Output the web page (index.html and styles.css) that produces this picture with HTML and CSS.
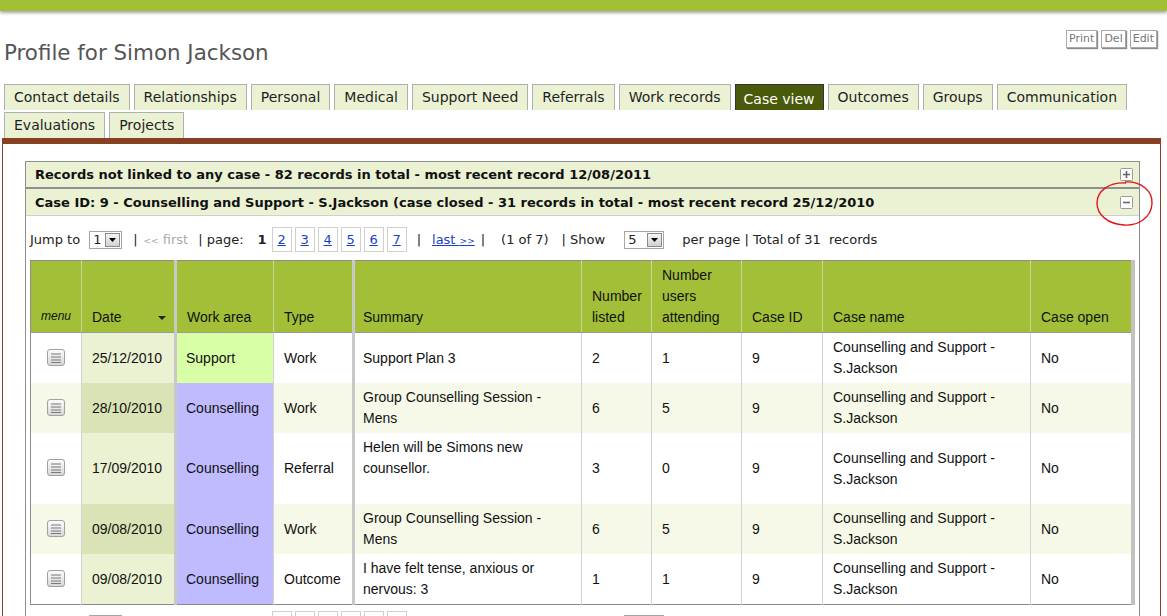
FILE: index.html
```html
<!DOCTYPE html>
<html>
<head>
<meta charset="utf-8">
<title>Profile for Simon Jackson</title>
<link rel="stylesheet" href="styles.css">
</head>
<body>
<div class="topbar"></div>
<div class="header">
  <h1 class="title">Profile for Simon Jackson</h1>
  <div class="actions">
    <span class="btn">Print</span>
    <span class="btn">Del</span>
    <span class="btn">Edit</span>
  </div>
</div>
<div class="tabs">
  <span class="tab">Contact details</span>
  <span class="tab">Relationships</span>
  <span class="tab">Personal</span>
  <span class="tab">Medical</span>
  <span class="tab">Support Need</span>
  <span class="tab">Referrals</span>
  <span class="tab">Work records</span>
  <span class="tab active">Case view</span>
  <span class="tab">Outcomes</span>
  <span class="tab">Groups</span>
  <span class="tab">Communication</span>
  <span class="tab">Evaluations</span>
  <span class="tab">Projects</span>
</div>
<div class="panel">
  <div class="casebox">
    <div class="casehead first">
      <span>Records not linked to any case - 82 records in total - most recent record 12/08/2011</span>
      <span class="toggle">
        <svg width="13" height="13" viewBox="0 0 13 13"><rect x="0.5" y="0.5" width="12" height="12" rx="1" fill="#fff" stroke="#9a9a9a"/><path d="M3 6.5h7M6.5 3v7" stroke="#666" stroke-width="1.6"/></svg>
      </span>
    </div>
    <div class="casehead second">
      <span>Case ID: 9 - Counselling and Support - S.Jackson (case closed - 31 records in total - most recent record 25/12/2010</span>
      <span class="toggle">
        <svg width="13" height="13" viewBox="0 0 13 13"><rect x="0.5" y="0.5" width="12" height="12" rx="1" fill="#fff" stroke="#9a9a9a"/><path d="M3 6.5h7" stroke="#666" stroke-width="1.6"/></svg>
      </span>
    </div>
    <svg class="annot" width="60" height="48" viewBox="0 0 60 48"><path d="M30 2 C46 1 58 11 57 24 C56 37 44 46 29 45 C13 44 2 35 2 23 C2 11 14 2 31 3" fill="none" stroke="#e0161b" stroke-width="1.4"/></svg>
    <div class="casebody">
      <div class="pager">
        <span class="p-jump">Jump to</span>
        <span class="sel sel-page"><span class="sel-val">1</span><span class="sel-btn"><svg width="7" height="4" viewBox="0 0 7 4"><path d="M0 0h7L3.5 4z" fill="#000"/></svg></span></span>
        <span class="p-bar1">|</span>
        <span class="p-first"><span class="arr">&lt;&lt;</span> first</span>
        <span class="p-page">| page:</span>
        <span class="p-cur">1</span>
        <span class="p-nums">
          <a class="p-num">2</a><a class="p-num">3</a><a class="p-num">4</a><a class="p-num">5</a><a class="p-num">6</a><a class="p-num">7</a>
        </span>
        <span class="p-bar2">|</span>
        <a class="p-last">last <span class="arr">&gt;&gt;</span></a>
        <span class="p-bar3">|</span>
        <span class="p-of">(1 of 7)</span>
        <span class="p-show">| Show</span>
        <span class="sel sel-size"><span class="sel-val">5</span><span class="sel-btn"><svg width="7" height="4" viewBox="0 0 7 4"><path d="M0 0h7L3.5 4z" fill="#000"/></svg></span></span>
        <span class="p-per">per page | Total of 31&nbsp; records</span>
      </div>
      <table class="records">
        <colgroup>
          <col class="c-menu"><col class="c-date"><col class="c-area"><col class="c-type"><col class="c-sum"><col class="c-listed"><col class="c-att"><col class="c-id"><col class="c-name"><col class="c-open">
        </colgroup>
        <thead>
          <tr>
            <th class="menuh">menu</th>
            <th class="thick">Date <span class="sort"></span></th>
            <th>Work area</th>
            <th class="thick">Type</th>
            <th class="sum">Summary</th>
            <th>Number<br>listed</th>
            <th>Number<br>users<br>attending</th>
            <th>Case ID</th>
            <th>Case name</th>
            <th class="last">Case open</th>
          </tr>
        </thead>
        <tbody>
          <tr>
            <td class="menu"><span class="micon"><svg width="18" height="17" viewBox="0 0 18 17"><defs><linearGradient id="mg" x1="0" y1="0" x2="0" y2="1"><stop offset="0" stop-color="#fdfdfd"/><stop offset="1" stop-color="#d6d6d6"/></linearGradient></defs><rect x="0.5" y="0.5" width="17" height="16" rx="2.5" fill="url(#mg)" stroke="#a0a0a0"/><path d="M4 5h10M4 8h10M4 11h10M4 13.5h10" stroke="#7a7a7a" stroke-width="1.2"/></svg></span></td>
            <td class="date thick">25/12/2010</td>
            <td class="area support">Support</td>
            <td class="thick">Work</td>
            <td class="sum">Support Plan 3</td>
            <td>2</td>
            <td>1</td>
            <td>9</td>
            <td>Counselling and Support -<br>S.Jackson</td>
            <td class="last">No</td>
          </tr>
          <tr class="alt">
            <td class="menu"><span class="micon"><svg width="18" height="17" viewBox="0 0 18 17"><rect x="0.5" y="0.5" width="17" height="16" rx="2.5" fill="url(#mg)" stroke="#a0a0a0"/><path d="M4 5h10M4 8h10M4 11h10M4 13.5h10" stroke="#7a7a7a" stroke-width="1.2"/></svg></span></td>
            <td class="date thick">28/10/2010</td>
            <td class="area counsel">Counselling</td>
            <td class="thick">Work</td>
            <td class="sum">Group Counselling Session -<br>Mens</td>
            <td>6</td>
            <td>5</td>
            <td>9</td>
            <td>Counselling and Support -<br>S.Jackson</td>
            <td class="last">No</td>
          </tr>
          <tr>
            <td class="menu"><span class="micon"><svg width="18" height="17" viewBox="0 0 18 17"><rect x="0.5" y="0.5" width="17" height="16" rx="2.5" fill="url(#mg)" stroke="#a0a0a0"/><path d="M4 5h10M4 8h10M4 11h10M4 13.5h10" stroke="#7a7a7a" stroke-width="1.2"/></svg></span></td>
            <td class="date thick">17/09/2010</td>
            <td class="area counsel">Counselling</td>
            <td class="thick">Referral</td>
            <td class="sum">Helen will be Simons new<br>counsellor.<br>&nbsp;</td>
            <td>3</td>
            <td>0</td>
            <td>9</td>
            <td>Counselling and Support -<br>S.Jackson</td>
            <td class="last">No</td>
          </tr>
          <tr class="alt">
            <td class="menu"><span class="micon"><svg width="18" height="17" viewBox="0 0 18 17"><rect x="0.5" y="0.5" width="17" height="16" rx="2.5" fill="url(#mg)" stroke="#a0a0a0"/><path d="M4 5h10M4 8h10M4 11h10M4 13.5h10" stroke="#7a7a7a" stroke-width="1.2"/></svg></span></td>
            <td class="date thick">09/08/2010</td>
            <td class="area counsel">Counselling</td>
            <td class="thick">Work</td>
            <td class="sum">Group Counselling Session -<br>Mens</td>
            <td>6</td>
            <td>5</td>
            <td>9</td>
            <td>Counselling and Support -<br>S.Jackson</td>
            <td class="last">No</td>
          </tr>
          <tr>
            <td class="menu"><span class="micon"><svg width="18" height="17" viewBox="0 0 18 17"><rect x="0.5" y="0.5" width="17" height="16" rx="2.5" fill="url(#mg)" stroke="#a0a0a0"/><path d="M4 5h10M4 8h10M4 11h10M4 13.5h10" stroke="#7a7a7a" stroke-width="1.2"/></svg></span></td>
            <td class="date thick">09/08/2010</td>
            <td class="area counsel">Counselling</td>
            <td class="thick">Outcome</td>
            <td class="sum">I have felt tense, anxious or<br>nervous: 3</td>
            <td>1</td>
            <td>1</td>
            <td>9</td>
            <td>Counselling and Support -<br>S.Jackson</td>
            <td class="last">No</td>
          </tr>
        </tbody>
      </table>
      <div class="pager">
        <span class="p-jump">Jump to</span>
        <span class="sel sel-page"><span class="sel-val">1</span><span class="sel-btn"><svg width="7" height="4" viewBox="0 0 7 4"><path d="M0 0h7L3.5 4z" fill="#000"/></svg></span></span>
        <span class="p-bar1">|</span>
        <span class="p-first"><span class="arr">&lt;&lt;</span> first</span>
        <span class="p-page">| page:</span>
        <span class="p-cur">1</span>
        <span class="p-nums">
          <a class="p-num">2</a><a class="p-num">3</a><a class="p-num">4</a><a class="p-num">5</a><a class="p-num">6</a><a class="p-num">7</a>
        </span>
        <span class="p-bar2">|</span>
        <a class="p-last">last <span class="arr">&gt;&gt;</span></a>
        <span class="p-bar3">|</span>
        <span class="p-of">(1 of 7)</span>
        <span class="p-show">| Show</span>
        <span class="sel sel-size"><span class="sel-val">5</span><span class="sel-btn"><svg width="7" height="4" viewBox="0 0 7 4"><path d="M0 0h7L3.5 4z" fill="#000"/></svg></span></span>
        <span class="p-per">per page | Total of 31&nbsp; records</span>
      </div>
    </div>
  </div>
</div>
</body>
</html>
```
FILE: styles.css
```css
* { box-sizing: border-box; }
html, body { margin: 0; padding: 0; background: #fff; }
body {
  font-family: "DejaVu Sans", Verdana, sans-serif;
  color: #222;
  width: 1167px;
  height: 616px;
  overflow: hidden;
}
.topbar {
  height: 11px;
  background: #a3bf36;
  box-shadow: 0 2px 3px rgba(0,0,0,0.35);
}
.header {
  display: flex;
  justify-content: space-between;
  align-items: flex-start;
  padding: 0 10px 0 4px;
  height: 73px;
}
.title {
  margin: 30px 0 0 0;
  font-size: 21.4px;
  line-height: 24px;
  font-weight: normal;
  color: #555;
}
.actions {
  display: flex;
  gap: 4px;
  margin-top: 19px;
}
.btn {
  display: inline-block;
  height: 18px;
  line-height: 16px;
  padding: 0 2px;
  font-size: 11px;
  color: #777;
  border: 1px solid #aaa;
  background: #fff;
  box-shadow: 1px 1px 1px #8a8a8a;
}
.tabs {
  display: flex;
  flex-wrap: wrap;
  column-gap: 4px;
  row-gap: 2px;
  padding-left: 4px;
  width: 1167px;
}
.tab {
  display: inline-block;
  height: 26px;
  line-height: 25px;
  padding: 0 9px;
  font-size: 14px;
  color: #1f1f1f;
  background: #ebf2d3;
  border: 1px solid #b0b0b0;
  border-bottom: none;
}
.tab.active {
  background: #4a5a0b;
  border-color: #333;
  color: #fff;
  line-height: 28px;
  padding: 0 8px;
}
.panel {
  margin: 0 6px 0 2px;
  border-top: 6px solid #874022;
  border-left: 1px solid #874022;
  border-right: 1px solid #874022;
  padding: 17px 20px 0 22px;
  height: 500px;
}
.casebox {
  position: relative;
  border: 1px solid #8e8e8e;
  height: 480px;
}
.casehead {
  display: flex;
  justify-content: space-between;
  align-items: center;
  height: 27px;
  padding: 0 6px 0 9px;
  background: #ebf2d3;
  font-family: "DejaVu Sans", Verdana, sans-serif;
  font-weight: bold;
  font-size: 13px;
  color: #111;
}
.casehead.first {
  border-bottom: 2px solid #8e8e8e;
}
.casehead.second {
  height: 27px;
  border-bottom: 1px solid #cfcfcf;
}
.toggle { display: flex; }
.annot {
  position: absolute;
  top: 18px;
  right: -16px;
}
.casebody {
  padding: 11px 5px 0 4px;
}
.pager {
  display: flex;
  align-items: center;
  height: 25px;
  font-family: "DejaVu Sans", Verdana, sans-serif;
  font-size: 13px;
  color: #222;
  white-space: pre;
}
.arr { font-size: 9px; }
.sel {
  display: inline-flex;
  align-items: center;
  justify-content: space-between;
  height: 18px;
  border: 1px solid #a5a5a5;
  background: #fff;
  padding: 1px 1px 1px 3px;
}
.sel-page { width: 33px; margin-left: 9px; }
.sel-size { width: 40px; margin-left: 19px; }
.sel-btn {
  display: inline-flex;
  align-items: center;
  justify-content: center;
  width: 15px;
  height: 14px;
  border: 1px solid #8a8a8a;
  background: linear-gradient(#f4f4f4, #d2d2d2);
}
.p-bar1 { margin-left: 11px; }
.p-first { margin-left: 6px; color: #aaa; }
.p-page { margin-left: 10px; }
.p-cur { margin-left: 14px; font-weight: bold; }
.p-nums { display: flex; gap: 3px; margin-left: 5px; }
.p-num {
  display: inline-block;
  width: 20px;
  height: 25px;
  line-height: 23px;
  text-align: center;
  border: 1px solid #cfcfcf;
  color: #1a3fc8;
  text-decoration: underline;
}
.p-bar2 { margin-left: 10px; }
.p-last { margin-left: 11px; color: #1a3fc8; text-decoration: underline; }
.p-bar3 { margin-left: 6px; }
.p-of { margin-left: 16px; }
.p-show { margin-left: 13px; }
.p-per { margin-left: 18px; }
.records {
  margin: 8px 0 6px 0;
  width: 1102px;
  table-layout: fixed;
  border-collapse: collapse;
  font-family: "Liberation Sans", Arial, sans-serif;
  font-size: 14px;
  color: #111;
  border: 1px solid #8a8a8a;
  border-right: 4px solid #c2c2c2;
}
.c-menu { width: 51px; }
.c-date { width: 94px; }
.c-area { width: 98px; }
.c-type { width: 80px; }
.c-sum { width: 228px; }
.c-listed { width: 70px; }
.c-att { width: 90px; }
.c-id { width: 81px; }
.c-name { width: 208px; }
.c-open { width: 102px; }
.records th {
  background: #a2bf37;
  font-weight: normal;
  text-align: left;
  vertical-align: bottom;
  height: 72px;
  line-height: 21px;
  padding: 0 8px 4px 10px;
  border-right: 1px solid #c9d69a;
  border-bottom: 1px solid #9a9a9a;
}
.records th.thick, .records td.thick { border-right: 3px solid #c8c8c8; }
.records th.last, .records td.last { border-right: none; }
.records th.sum, .records td.sum { padding-left: 8px; }
.records th.menuh {
  font-style: italic;
  font-size: 12px;
  text-align: center;
  padding: 0 0 5px 0;
}
.sort {
  display: inline-block;
  float: right;
  margin: 9px 0 0 0;
  width: 0;
  height: 0;
  border-left: 4px solid transparent;
  border-right: 4px solid transparent;
  border-top: 4px solid #222;
}
.records td {
  vertical-align: middle;
  line-height: 21px;
  padding: 4px 8px 4px 10px;
  border-right: 1px solid #d2d2d2;
  background: #fff;
}
.records tr.alt td { background: #f6f9e7; }
.records td.menu { text-align: center; padding: 4px 0 0 0; }
.micon { display: inline-block; }
.records td.date { background: #ebf2d3; }
.records tr.alt td.date { background: #dae3b6; }
.records td.area { padding-left: 9px; }
.records td.area.support, .records tr.alt td.area.support { background: #d8ffa6; }
.records td.area.counsel, .records tr.alt td.area.counsel { background: #c0baff; }
```
